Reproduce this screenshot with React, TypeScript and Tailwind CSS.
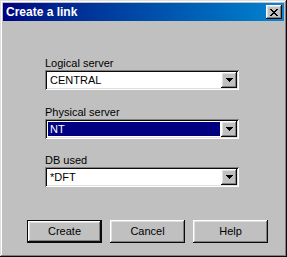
import React from "react";

const raised =
  "shadow-[inset_-1px_-1px_#0a0a0a,inset_1px_1px_#ffffff,inset_-2px_-2px_#808080,inset_2px_2px_#dfdfdf]";
const sunken =
  "shadow-[inset_1px_1px_#808080,inset_-1px_-1px_#ffffff,inset_2px_2px_#0a0a0a,inset_-2px_-2px_#dfdfdf]";

function CloseX() {
  // 8x7 pixel cross, like the classic caption button
  const px: [number, number][] = [
    [0, 0], [1, 0], [6, 0], [7, 0],
    [1, 1], [2, 1], [5, 1], [6, 1],
    [2, 2], [3, 2], [4, 2], [5, 2],
    [3, 3], [4, 3],
    [2, 4], [3, 4], [4, 4], [5, 4],
    [1, 5], [2, 5], [5, 5], [6, 5],
    [0, 6], [1, 6], [6, 6], [7, 6],
  ];
  return (
    <svg width="8" height="7" viewBox="0 0 8 7" shapeRendering="crispEdges">
      {px.map(([x, y]) => (
        <rect key={`${x}-${y}`} x={x} y={y} width="1" height="1" fill="#000" />
      ))}
    </svg>
  );
}

function Arrow() {
  return (
    <svg width="7" height="4" viewBox="0 0 7 4" shapeRendering="crispEdges">
      <rect x="0" y="0" width="7" height="1" fill="#000" />
      <rect x="1" y="1" width="5" height="1" fill="#000" />
      <rect x="2" y="2" width="3" height="1" fill="#000" />
      <rect x="3" y="3" width="1" height="1" fill="#000" />
    </svg>
  );
}

function Combo({ value, focused }: { value: string; focused?: boolean }) {
  return (
    <div className={`w-[194px] h-[20px] p-[2px] bg-white flex ${sunken}`}>
      <div className="flex-1 p-px">
        <div
          className={`h-full pl-[2px] leading-[14px] ${
            focused ? "bg-[#000080] text-white" : "text-black"
          }`}
        >
          {value}
        </div>
      </div>
      <div
        className={`w-[16px] h-[16px] bg-[#c0c0c0] flex items-center justify-center pb-px ${raised}`}
      >
        <Arrow />
      </div>
    </div>
  );
}

function Button({ label, isDefault }: { label: string; isDefault?: boolean }) {
  return (
    <div
      className={`w-[75px] h-[23px] bg-[#c0c0c0] flex items-center justify-center text-black ${
        isDefault
          ? "shadow-[inset_0_0_0_1px_#0a0a0a,inset_-2px_-2px_#0a0a0a,inset_2px_2px_#ffffff,inset_-3px_-3px_#808080,inset_3px_3px_#dfdfdf]"
          : raised
      }`}
    >
      {label}
    </div>
  );
}

export default function App() {
  return (
    <div
      className="w-[287px] h-[257px] p-[3px] bg-[#c0c0c0] flex flex-col text-[11px] shadow-[inset_-1px_-1px_#0a0a0a,inset_1px_1px_#dfdfdf,inset_-2px_-2px_#808080,inset_2px_2px_#ffffff]"
      style={{ fontFamily: '"Liberation Sans", Arial, sans-serif' }}
    >
      <div className="h-[18px] bg-linear-to-r from-[#000080] to-[#1084d0] flex items-center justify-between pl-[3px] pr-[2px]">
        <span className="text-white font-bold text-[12px] leading-[18px]">Create a link</span>
        <div className={`w-[16px] h-[14px] bg-[#c0c0c0] flex items-center justify-center ${raised}`}>
          <CloseX />
        </div>
      </div>

      <div className="ml-[42px] mt-[36px] flex flex-col">
        <div className="leading-[13px] h-[13px] text-black">Logical server</div>
        <Combo value="CENTRAL" />
        <div className="mt-[16px] leading-[13px] h-[13px] text-black">Physical server</div>
        <Combo value="NT" focused />
        <div className="mt-[15px] leading-[13px] h-[13px] text-black">DB used</div>
        <Combo value="*DFT" />
      </div>

      <div className="ml-[24px] mt-[33px] flex gap-2">
        <Button label="Create" isDefault />
        <Button label="Cancel" />
        <Button label="Help" />
      </div>
    </div>
  );
}
